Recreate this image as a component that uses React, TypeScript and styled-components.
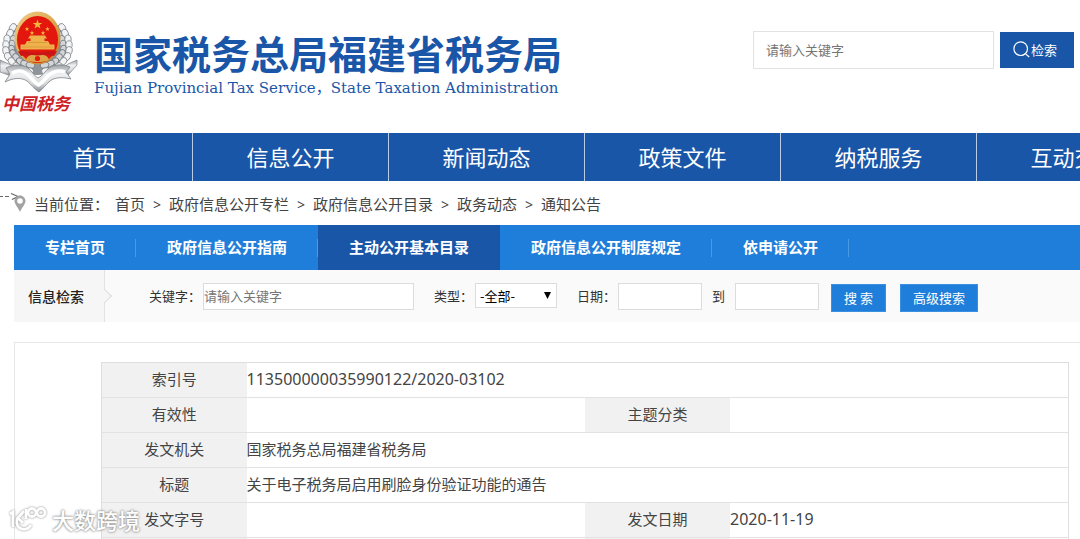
import React from 'react';
import styled, { createGlobalStyle } from 'styled-components';

const NAVY = '#1a56a8';
const BLUE = '#1f7ed9';
const SANS = '"Noto Sans", "Noto Sans CJK SC", sans-serif';

const GlobalStyle = createGlobalStyle`
  * { box-sizing: border-box; }
  body {
    margin: 0;
    background: #fff;
    color: #444;
    font-family: "Noto Sans CJK SC", sans-serif;
    font-size: 15px;
  }
  a { color: inherit; text-decoration: none; }
  ul, ol { list-style: none; margin: 0; padding: 0; }
  h1, p { margin: 0; }
  button, input, select { font-family: inherit; border-radius: 0; margin: 0; }
`;

const Page = styled.div`
  position: relative;
  height: 100vh;
  overflow: hidden;
`;

const Header = styled.header`
  display: flex;
  align-items: flex-start;
  height: 133px;
  padding-right: 6px;
`;

const Logo = styled.a`
  display: flex;
  flex-direction: column;
  flex: none;
  width: 80px;
  padding-top: 10px;
`;

const LogoName = styled.span`
  padding-left: 2px;
  color: #cf1f26;
  font-size: 17px;
  font-weight: 700;
  font-style: italic;
  line-height: 20px;
  white-space: nowrap;
`;

const Titles = styled.div`
  flex: none;
  padding: 27px 0 0 14px;
  color: ${NAVY};
  white-space: nowrap;
`;

const Title = styled.h1`
  font-size: 39px;
  font-weight: 700;
  line-height: 50px;
`;

const Subtitle = styled.p`
  font-family: "DejaVu Serif", "Noto Sans CJK SC", serif;
  font-size: 15px;
  line-height: 22px;
`;

const SiteSearch = styled.form`
  display: flex;
  align-items: center;
  gap: 6px;
  margin: 31px 0 0 auto;
`;

const SiteSearchInput = styled.input`
  width: 241px;
  height: 38px;
  padding: 0 12px 2px;
  border: 1px solid #e2e2e2;
  font-size: 13px;
  &::placeholder { color: #757575; opacity: 1; }
`;

const SiteSearchButton = styled.button`
  display: flex;
  align-items: center;
  justify-content: center;
  gap: 1px;
  width: 74px;
  height: 36px;
  padding: 0 4px 1px 0;
  border: 0;
  background: ${NAVY};
  color: #fff;
  font-size: 13px;
`;

const MainNav = styled.nav`
  overflow: hidden;
  background: ${NAVY};
`;

const MainNavList = styled.ul`
  display: flex;
  margin-left: -3px;
`;

const MainNavItem = styled.li`
  flex: 1 0 196px;
  padding-bottom: 2px;
  border-right: 1px solid #b8cce6;
  color: #fff;
  font-size: 22px;
  line-height: 46px;
  text-align: center;
`;

const Breadcrumb = styled.nav`
  display: flex;
  align-items: center;
  height: 44px;
  white-space: nowrap;
`;

const Crumbs = styled.ol`
  display: flex;
  margin-left: 6px;
`;

const Crumb = styled.li`
  &:not(:last-child)::after {
    content: ">";
    display: inline-block;
    width: 24px;
    text-align: center;
    font-family: "Noto Sans", sans-serif;
    font-size: 14px;
  }
`;

const Content = styled.main`
  margin-left: 14px;
`;

const Tabs = styled.nav`
  display: flex;
  background: ${BLUE};
`;

const Tab = styled.a<{ $active?: boolean }>`
  position: relative;
  padding: 0 31px 1px;
  background: ${(p) => (p.$active ? NAVY : 'transparent')};
  color: #fff;
  font-weight: 700;
  line-height: 44px;
  white-space: nowrap;
  &::after {
    content: "";
    display: ${(p) => (p.$active ? 'none' : 'block')};
    position: absolute;
    top: 14px;
    right: 0;
    width: 1px;
    height: 18px;
    background: #4a99e4;
  }
`;

const FilterBar = styled.form`
  display: flex;
  height: 52px;
  background: #fafafa;
  white-space: nowrap;
`;

const FilterTitle = styled.div`
  position: relative;
  flex: none;
  width: 91px;
  padding-left: 14px;
  border-right: 1px solid #e2e2e2;
  background: #f6f6f6;
  color: #222;
  font-size: 14px;
  font-weight: 500;
  line-height: 52px;
  &::after {
    content: "";
    position: absolute;
    top: 21px;
    right: -6px;
    width: 9px;
    height: 9px;
    border: solid #dcdcdc;
    border-width: 1px 1px 0 0;
    background: linear-gradient(45deg, transparent 50%, #f6f6f6 50%);
    transform: rotate(45deg);
  }
`;

const Fields = styled.div`
  display: flex;
  align-items: flex-start;
  gap: 20px;
  padding: 13px 0 0 44px;
  color: #333;
  font-size: 13px;
`;

const Field = styled.div<{ $gap?: number }>`
  display: flex;
  gap: ${(p) => p.$gap ?? 2}px;
  line-height: 26px;
`;

const TextInput = styled.input<{ $width: number }>`
  width: ${(p) => p.$width}px;
  height: 27px;
  padding: 0 0 3px;
  border: 1px solid #dcdcdc;
  background: #fff;
  font-size: 13px;
  &::placeholder { color: #757575; opacity: 1; }
`;

const SelectBox = styled.span`
  position: relative;
  svg {
    position: absolute;
    top: 9px;
    right: 6px;
    pointer-events: none;
  }
`;

const Select = styled.select`
  display: block;
  appearance: none;
  width: 82px;
  height: 25px;
  padding: 0 0 0 4px;
  border: 1px solid #dcdcdc;
  background: #fff;
  color: #000;
  font-size: 13px;
`;

const Actions = styled.div`
  display: flex;
  gap: 14px;
  margin-left: 12px;
  padding-top: 14px;
`;

const ActionButton = styled.button`
  height: 28px;
  padding: 0 12px 1px;
  border: 1px solid #3a8fe0;
  background: ${BLUE};
  color: #fff;
  font-size: 13px;
`;

const Panel = styled.section`
  margin-top: 20px;
  padding: 19px 11px 20px 86px;
  border: solid #e6e6e6;
  border-width: 1px 0 0 1px;
`;

const InfoTable = styled.table`
  width: 100%;
  border: 1px solid #dedede;
  border-collapse: collapse;
  table-layout: fixed;
  line-height: 22px;
  tr { height: 35px; border-bottom: 1px solid #e2e2e2; }
  th {
    padding: 0 0 3px;
    background: #f1f1f1;
    font-weight: 400;
    text-align: center;
  }
  td { padding: 0 0 3px; }
`;

const Code = styled.span`
  font-family: ${SANS};
  font-size: 16px;
`;

const Watermark = styled.div`
  position: absolute;
  left: 8px;
  bottom: 5px;
  display: flex;
  align-items: center;
  gap: 4px;
  color: #fff;
  font-size: 22px;
  line-height: 30px;
  font-weight: 500;
  text-shadow: 0 0 2px #888, 0 0 3px #999;
  svg { filter: drop-shadow(0 0 1px #888); }
`;

const star = (cx: number, cy: number, r: number) =>
  Array.from({ length: 10 }, (_, i) => {
    const a = (Math.PI / 5) * i - Math.PI / 2;
    const d = i % 2 ? r * 0.4 : r;
    return `${cx + d * Math.cos(a)},${cy + d * Math.sin(a)}`;
  }).join(' ');

const leaves = [
  [12, 17, 30], [9, 23, 18], [6, 29, 8], [5, 35, -2], [5, 41, -12], [7, 47, -26],
  [11, 52, -40], [16, 57, -52], [22, 60, -64], [29, 62, -78],
];

const Emblem = () => (
  <svg width="78" height="83" viewBox="0 0 78 83" role="img" aria-label="税徽">
    <defs>
      <linearGradient id="silver" x1="0" y1="0" x2="0" y2="1">
        <stop offset="0" stopColor="#9da1a6" />
        <stop offset="0.35" stopColor="#eff0f1" />
        <stop offset="0.7" stopColor="#d6d8da" />
        <stop offset="1" stopColor="#85898e" />
      </linearGradient>
      <linearGradient id="gold" x1="0" y1="0" x2="1" y2="1">
        <stop offset="0" stopColor="#f0cf8e" />
        <stop offset="0.5" stopColor="#dda94f" />
        <stop offset="1" stopColor="#b97928" />
      </linearGradient>
    </defs>
    <path d="M13 15C3 24 2 42 9 52C17 61 28 65 37.500 65C47 65 58 61 66 52C73 42 72 24 62 15Z" fill="#8f9499" />
    {[0, 1].map((side) => (
      <g key={side} transform={side ? 'matrix(-1 0 0 1 75 0)' : undefined}>
        {leaves.map(([x, y, a], i) => (
          <g key={i} transform={`rotate(${a} ${x} ${y})`}>
            <ellipse cx={x + 7} cy={y} rx="3" ry="4.500" fill="#d3d6d9" stroke="#777c82" strokeWidth="0.900" />
            <ellipse cx={x + 1} cy={y} rx="3.200" ry="4.200" fill="#f2f3f4" stroke="#81868c" strokeWidth="0.800" />
          </g>
        ))}
      </g>
    ))}
    <ellipse cx="37.500" cy="28" rx="23" ry="26.500" fill="url(#gold)" />
    <ellipse cx="37.500" cy="29.500" rx="20.500" ry="23.500" fill="#e3170d" />
    <polygon points={star(37.5, 14.5, 5)} fill="#f5b73c" />
    <polygon points={star(27, 19, 2.4)} fill="#f5b73c" />
    <polygon points={star(47.5, 19, 2.4)} fill="#f5b73c" />
    <polygon points={star(32, 23, 2.4)} fill="#f5b73c" />
    <polygon points={star(43, 23, 2.4)} fill="#f5b73c" />
    <path d="M30 25.500H45L47 28.500H44.500V31H48L50 34.500H54.500V39.500H20.500V34.500H25L27 31H30.500V28.500H28Z" fill="#efb14c" />
    <path d="M28 32.500H47M22 37H53" stroke="#c98428" strokeWidth="0.500" />
    <path d="M18 41.500C25 40 31 43 37.500 42.500C44 43 50 40 57 41.500L54 46C48 44 43 47 37.500 46C32 47 27 44 21 46Z" fill="#c91515" />
    <path d="M26 49.500C29 43 34 45.500 37.500 45.500C41 45.500 46 43 49 49.500C45 53 30 53 26 49.500Z" fill="#dca54a" />
    <circle cx="37.500" cy="48.500" r="2.600" fill="#e3170d" />
    <path d="M0 50L9 54L16 60L8 64L11 66L0 62Z" fill="url(#silver)" stroke="#7f8489" strokeWidth="0.700" />
    <path d="M77 50L68 54L60 60L68 65L77 55Z" fill="url(#silver)" stroke="#7f8489" strokeWidth="0.700" />
    <path d="M6 58C13 54 22 54 28 58C32 61 34 66 38 68C43 66 45 61 49 58C55 54 63 54 70 57L66 62L71 69C63 67 55 67 50 71C46 74 43 79 39 82C34 79 31 74 27 71C21 67 13 68 5 72L10 64Z" fill="url(#silver)" stroke="#7f8489" strokeWidth="0.800" />
    <path d="M12 63C18 60 24 61 28 65C32 69 35 73 38.500 75C42 73 45 69 49 65C53 61 60 60 65 62" fill="none" stroke="#fff" strokeWidth="3.500" />
  </svg>
);

const SearchIcon = () => (
  <svg width="17" height="17" viewBox="0 0 17 17" fill="none" stroke="#fff" strokeWidth="1.2" aria-hidden="true">
    <circle cx="7.7" cy="7.7" r="6.8" />
    <path d="M12.3 12.6L16.2 16" />
  </svg>
);

const PinIcon = () => (
  <svg width="34" height="26" viewBox="0 0 34 26" fill="none" aria-hidden="true">
    <path d="M0 6.500H3M5 6.500H9M11 3.500L18 6.500L12 9.500" stroke="#666" strokeWidth="1.2" />
    <path fillRule="evenodd" d="M20 5.500C17 5.500 14.500 8 14.500 11C14.500 14 18 17.500 20 22C22 17.500 25.500 14 25.500 11C25.500 8 23 5.500 20 5.500ZM20 8.200A2.800 2.800 0 1 1 20 13.800A2.800 2.800 0 1 1 20 8.200Z" fill="#a2a2a2" />
  </svg>
);

const WatermarkIcon = () => (
  <svg width="40" height="30" viewBox="0 0 40 30" fill="none" stroke="#fff" strokeWidth="2.800" aria-hidden="true">
    <path d="M2 10L5 8V23" />
    <path d="M16 7L9 15C8 20 10 24 14 25C18 26 21 24 23 21M10 14L15 19" />
    <path d="M18 5V15" />
    <circle cx="24" cy="8.500" r="4" />
    <circle cx="33" cy="8.500" r="4" />
  </svg>
);

const navItems = ['首页', '信息公开', '新闻动态', '政策文件', '纳税服务', '互动交流'];
const crumbs = ['首页', '政府信息公开专栏', '政府信息公开目录', '政务动态', '通知公告'];
const tabs = ['专栏首页', '政府信息公开指南', '主动公开基本目录', '政府信息公开制度规定', '依申请公开'];

export default function App() {
  return (
    <Page>
      <GlobalStyle />
      <Header>
        <Logo href="#">
          <Emblem />
          <LogoName>中国税务</LogoName>
        </Logo>
        <Titles>
          <Title>国家税务总局福建省税务局</Title>
          <Subtitle>Fujian Provincial Tax Service，State Taxation Administration</Subtitle>
        </Titles>
        <SiteSearch>
          <SiteSearchInput type="text" aria-label="站内检索" placeholder="请输入关键字" />
          <SiteSearchButton type="button"><SearchIcon />检索</SiteSearchButton>
        </SiteSearch>
      </Header>

      <MainNav>
        <MainNavList>
          {navItems.map((name) => (
            <MainNavItem key={name}><a href="#">{name}</a></MainNavItem>
          ))}
        </MainNavList>
      </MainNav>

      <Breadcrumb>
        <PinIcon />
        <span>当前位置：</span>
        <Crumbs>
          {crumbs.map((name) => (
            <Crumb key={name}><a href="#">{name}</a></Crumb>
          ))}
        </Crumbs>
      </Breadcrumb>

      <Content>
        <Tabs>
          {tabs.map((name) => (
            <Tab key={name} href="#" $active={name === '主动公开基本目录'}>{name}</Tab>
          ))}
        </Tabs>

        <FilterBar>
          <FilterTitle>信息检索</FilterTitle>
          <Fields>
            <Field>
              <label htmlFor="keyword">关键字：</label>
              <TextInput id="keyword" type="text" placeholder="请输入关键字" $width={211} />
            </Field>
            <Field>
              <label htmlFor="kind">类型：</label>
              <SelectBox>
                <Select id="kind"><option>-全部-</option></Select>
                <svg width="7" height="7" viewBox="0 0 7 7" aria-hidden="true"><path d="M0 0H7L3.500 7Z" fill="#000" /></svg>
              </SelectBox>
            </Field>
            <Field>
              <label htmlFor="from">日期：</label>
              <Field $gap={10}>
                <TextInput id="from" type="text" $width={84} />
                <label htmlFor="to">到</label>
                <TextInput id="to" type="text" $width={84} />
              </Field>
            </Field>
          </Fields>
          <Actions>
            <ActionButton type="button">搜 索</ActionButton>
            <ActionButton type="button">高级搜索</ActionButton>
          </Actions>
        </FilterBar>

        <Panel>
          <InfoTable>
            <colgroup>
              <col width="15%" /><col width="35%" /><col width="15%" /><col width="35%" />
            </colgroup>
            <tbody>
              <tr>
                <th scope="row">索引号</th>
                <td colSpan={3}><Code>113500000035990122/2020-03102</Code></td>
              </tr>
              <tr>
                <th scope="row">有效性</th><td />
                <th scope="row">主题分类</th><td />
              </tr>
              <tr>
                <th scope="row">发文机关</th>
                <td colSpan={3}>国家税务总局福建省税务局</td>
              </tr>
              <tr>
                <th scope="row">标题</th>
                <td colSpan={3}>关于电子税务局启用刷脸身份验证功能的通告</td>
              </tr>
              <tr>
                <th scope="row">发文字号</th><td />
                <th scope="row">发文日期</th><td><Code>2020-11-19</Code></td>
              </tr>
              <tr>
                <th /><td /><th /><td />
              </tr>
            </tbody>
          </InfoTable>
        </Panel>
      </Content>

      <Watermark><WatermarkIcon />大数跨境</Watermark>
    </Page>
  );
}
